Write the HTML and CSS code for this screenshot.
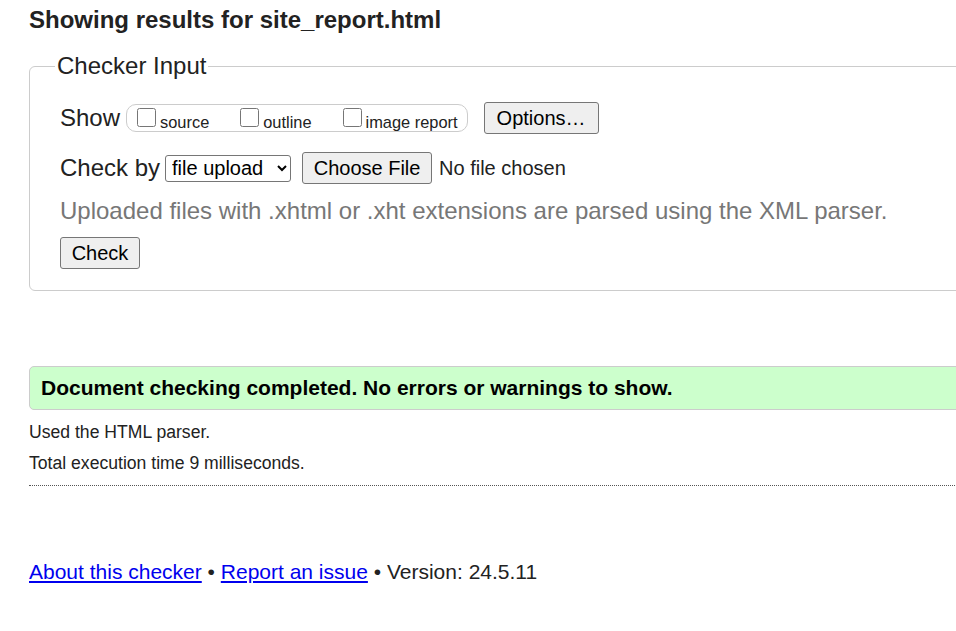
FILE: index.html
```html
<!DOCTYPE html>
<html lang="en">
<head>
<meta charset="utf-8">
<title>Nu Html Checker</title>
<link rel="stylesheet" href="styles.css">
</head>
<body>
<div class="page">
  <h2 class="title">Showing results for site_report.html</h2>
  <fieldset class="input-box">
    <legend class="legend">Checker Input</legend>
    <div class="row">
      <span class="row-label">Show</span>
      <span class="show-group">
        <label class="opt"><input type="checkbox" class="cb"><span class="opt-text">source</span></label>
        <label class="opt"><input type="checkbox" class="cb"><span class="opt-text">outline</span></label>
        <label class="opt"><input type="checkbox" class="cb"><span class="opt-text">image report</span></label>
      </span>
      <button class="btn btn-options" type="button">Options…</button>
    </div>
    <div class="row row-check">
      <span class="row-label row-label-check">Check by</span>
      <select class="sel"><option>file upload</option></select>
      <button class="btn btn-file" type="button">Choose File</button>
      <span class="nofile">No file chosen</span>
    </div>
    <p class="hint">Uploaded files with .xhtml or .xht extensions are parsed using the XML parser.</p>
    <button class="btn btn-check" type="button">Check</button>
  </fieldset>

  <p class="success">Document checking completed. No errors or warnings to show.</p>
  <p class="details">Used the HTML parser.</p>
  <p class="details details-time">Total execution time 9 milliseconds.</p>
  <hr class="sep">

  <p class="footer"><a href="#">About this checker</a> • <a href="#">Report an issue</a> • Version: 24.5.11</p>
</div>
</body>
</html>
```
FILE: styles.css
```css
html, body {
  margin: 0;
  padding: 0;
  overflow: hidden;
  background: #fff;
}
body {
  font-family: "Liberation Sans", Arial, sans-serif;
  color: #222;
}
.page {
  width: 1100px;
  padding: 0 0 0 29px;
}
.title {
  margin: 0;
  padding-top: 6px;
  font-size: 24px;
  line-height: 28px;
  font-weight: bold;
  color: #222;
}
.input-box {
  margin: 18px 0 0 0;
  border: 1px solid #ccc;
  border-radius: 6px;
  padding: 22px 30px 21px 30px;
  min-width: 0;
}
.legend {
  font-size: 24px;
  line-height: 28px;
  padding: 0 2px;
  margin-left: -5px;
  color: #222;
}
.row {
  display: flex;
  align-items: center;
  height: 32px;
}
.row-check {
  margin-top: 18px;
}
.row-label {
  font-size: 24px;
  color: #222;
  margin-right: 6px;
}
.row-label-check {
  margin-right: 5px;
}
.show-group {
  display: inline-flex;
  align-items: center;
  height: 26px;
  border: 1px solid #ccc;
  border-radius: 10px;
  padding: 0 9px 0 10px;
  gap: 31px;
}
.opt {
  display: inline-flex;
  align-items: flex-end;
  font-size: 16.4px;
  color: #222;
}
.cb {
  width: 19px;
  height: 19px;
  margin: 0 4px 2px 0;
}
.opt-text {
  line-height: 18px;
  position: relative;
  top: 2px;
}
.btn {
  font-family: "Liberation Sans", Arial, sans-serif;
  font-size: 20px;
  color: #000;
  background: #efefef;
  border: 1px solid #767676;
  border-radius: 3px;
  height: 32px;
  padding: 0 12px;
  line-height: 28px;
  white-space: nowrap;
}
.btn-options {
  margin-left: 16px;
}
.sel {
  font-family: "Liberation Sans", Arial, sans-serif;
  font-size: 20px;
  color: #000;
  height: 27px;
  width: 126px;
  border: 1px solid #767676;
  border-radius: 3px;
  background: #fff;
  padding: 0 2px;
}
.btn-file {
  margin-left: 11px;
  width: 130px;
  padding: 0;
}
.nofile {
  font-size: 20px;
  color: #222;
  margin-left: 7px;
}
.hint {
  margin: 13px 0 12px 0;
  font-size: 24px;
  line-height: 28px;
  color: #777;
}
.btn-check {
  display: block;
  width: 80px;
  padding: 0;
}
.success {
  margin: 75px 0 0 0;
  background: #ccffcc;
  border: 1px solid #ccc;
  border-radius: 5px;
  padding: 0 11px;
  height: 42px;
  line-height: 42px;
  font-size: 21px;
  font-weight: bold;
  color: #000;
}
.details {
  margin: 12px 0 0 0;
  font-size: 17.6px;
  line-height: 20px;
  color: #222;
}
.details-time {
  margin-top: 11px;
}
.sep {
  margin: 12px 0 0 0;
  border: 0;
  border-top: 1px dotted #555;
  height: 0;
}
.footer {
  margin: 74px 0 0 0;
  font-size: 21px;
  line-height: 24px;
  color: #222;
}
.footer a {
  color: #00e;
}
```
